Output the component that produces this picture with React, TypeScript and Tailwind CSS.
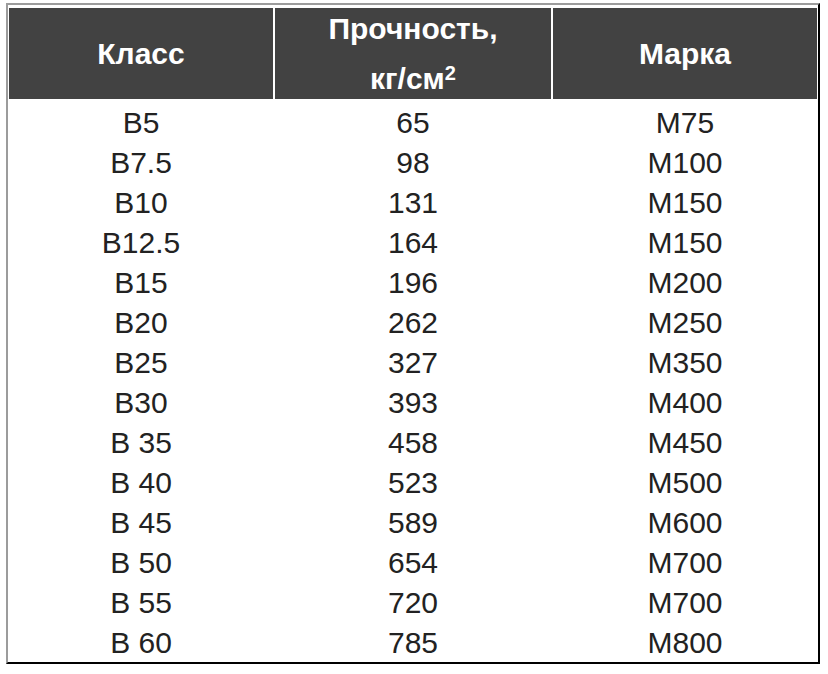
import React from 'react';

const rows = [
  ['B5', '65', 'M75'],
  ['B7.5', '98', 'M100'],
  ['B10', '131', 'M150'],
  ['B12.5', '164', 'M150'],
  ['B15', '196', 'M200'],
  ['B20', '262', 'M250'],
  ['B25', '327', 'M350'],
  ['B30', '393', 'M400'],
  ['B 35', '458', 'M450'],
  ['B 40', '523', 'M500'],
  ['B 45', '589', 'M600'],
  ['B 50', '654', 'M700'],
  ['B 55', '720', 'M700'],
  ['B 60', '785', 'M800'],
];

export default function App() {
  return (
    <div className="w-[828px] h-[674px] bg-white pt-[3px] pl-[6px] font-['Liberation_Sans',Arial,sans-serif]">
      <div className="w-[814px] border-2 border-t-[#9c9c9c] border-l-[#9c9c9c] border-r-black border-b-black pt-[3px] px-[1px] pb-[2px]">
        {/* Header */}
        <div className="grid grid-cols-[264px_276px_264px] grid-rows-[91px] gap-[2px] text-white font-bold text-[30px]">
          <div className="bg-[#424242] flex items-center justify-center">Класс</div>
          <div className="bg-[#424242] flex flex-col items-center justify-center min-h-0 leading-[50px]">
            <span>Прочность,</span>
            <span>
              кг/см<sup className="text-[20px] -top-[9px]">2</sup>
            </span>
          </div>
          <div className="bg-[#424242] flex items-center justify-center">Марка</div>
        </div>

        {/* Rows */}
        <div className="mt-[1px] text-[30px] text-[#222]">
          {rows.map((r) => (
            <div key={r[0]} className="grid grid-cols-[264px_276px_264px] gap-[2px] h-[40px] items-center text-center">
              <span>{r[0]}</span>
              <span>{r[1]}</span>
              <span>{r[2]}</span>
            </div>
          ))}
        </div>
      </div>
    </div>
  );
}
